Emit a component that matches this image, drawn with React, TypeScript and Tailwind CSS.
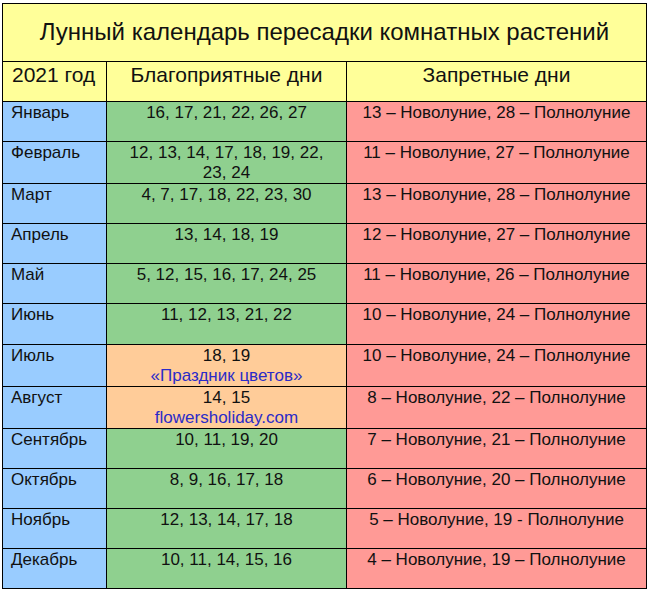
const rows = [
  { m: "Январь", good: ["16, 17, 21, 22, 26, 27"], bad: "13 – Новолуние, 28 – Полнолуние" },
  { m: "Февраль", good: ["12, 13, 14, 17, 18, 19, 22,", "23, 24"], bad: "11 – Новолуние, 27 – Полнолуние" },
  { m: "Март", good: ["4, 7, 17, 18, 22, 23, 30"], bad: "13 – Новолуние, 28 – Полнолуние" },
  { m: "Апрель", good: ["13, 14, 18, 19"], bad: "12 – Новолуние, 27 – Полнолуние" },
  { m: "Май", good: ["5, 12, 15, 16, 17, 24, 25"], bad: "11 – Новолуние, 26 – Полнолуние" },
  { m: "Июнь", good: ["11, 12, 13, 21, 22"], bad: "10 – Новолуние, 24 – Полнолуние" },
  { m: "Июль", good: ["18, 19"], note: "«Праздник цветов»", bad: "10 – Новолуние, 24 – Полнолуние" },
  { m: "Август", good: ["14, 15"], note: "flowersholiday.com", bad: "8 – Новолуние, 22 – Полнолуние" },
  { m: "Сентябрь", good: ["10, 11, 19, 20"], bad: "7 – Новолуние, 21 – Полнолуние" },
  { m: "Октябрь", good: ["8, 9, 16, 17, 18"], bad: "6 – Новолуние, 20 – Полнолуние" },
  { m: "Ноябрь", good: ["12, 13, 14, 17, 18"], bad: "5 – Новолуние, 19 - Полнолуние" },
  { m: "Декабрь", good: ["10, 11, 14, 15, 16"], bad: "4 – Новолуние, 19 – Полнолуние" },
];

export default function App() {
  return (
    <div className="h-[591px] w-[650px] bg-white pl-[2px] pt-[3px] font-['Liberation_Sans',Arial,sans-serif] text-[#111]">
      <div className="grid h-[586px] w-[645px] grid-cols-[103px_239px_299px] grid-rows-[57px_39px_repeat(12,1fr)] gap-px border border-black bg-black">
        <div className="col-span-3 flex items-center justify-center bg-[#ffff99] pb-[2px] text-[24px]">
          Лунный календарь пересадки комнатных растений
        </div>
        <div className="bg-[#ffff99] pl-[9px] pt-[1px] text-[21px] leading-[24px]">2021 год</div>
        <div className="bg-[#ffff99] pt-[1px] text-center text-[21px] leading-[24px]">Благоприятные дни</div>
        <div className="bg-[#ffff99] pt-[1px] text-center text-[21px] leading-[24px]">Запретные дни</div>
        {rows.map((r) => (
          <div key={r.m} className="contents">
            <div className="bg-[#99ccff] pl-[8px] pt-[1px] text-[17px] leading-[20px]">{r.m}</div>
            <div
              className={`pt-[1px] text-center text-[17px] leading-[20px] ${
                r.note ? "bg-[#ffcc99]" : "bg-[#8fd08f]"
              }`}
            >
              {r.good.map((g) => (
                <div key={g}>{g}</div>
              ))}
              {r.note && <div className="text-[#2b2bc8]">{r.note}</div>}
            </div>
            <div className="bg-[#ff9a96] pt-[1px] text-center text-[17px] leading-[20px]">{r.bad}</div>
          </div>
        ))}
      </div>
    </div>
  );
}
